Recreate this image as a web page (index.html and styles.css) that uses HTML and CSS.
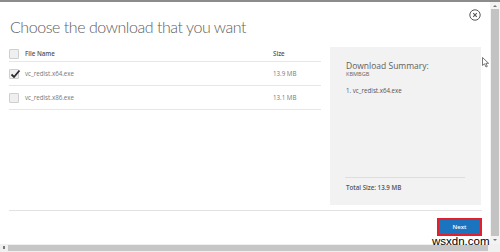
FILE: index.html
```html
<!DOCTYPE html>
<html>
<head>
<meta charset="utf-8">
<link rel="stylesheet" href="styles.css">
</head>
<body>
<div class="window">
  <div class="topbar"></div>
  <div class="body">
    <div class="main">
      <div class="head">
        <h1 class="title">Choose the download that you want</h1>
        <span class="close">
          <svg width="12" height="12" viewBox="0 0 12 12"><circle cx="6" cy="6" r="5.2" fill="none" stroke="#555" stroke-width="1"/><path d="M4.2 4.2L7.8 7.8M7.8 4.2L4.2 7.8" stroke="#555" stroke-width="1.1"/></svg>
        </span>
      </div>
      <div class="content">
        <div class="table">
          <div class="row header">
            <span class="cb"></span>
            <span class="name">File Name</span>
            <span class="size">Size</span>
          </div>
          <div class="row item">
            <span class="cb checked"><svg width="11" height="10" viewBox="0 0 11 10"><path d="M1.5 5.5L4 8L9.5 1.5" fill="none" stroke="#2a2a2a" stroke-width="1.8"/></svg></span>
            <span class="name">vc_redist.x64.exe</span>
            <span class="size">13.9 MB</span>
          </div>
          <div class="row item">
            <span class="cb"></span>
            <span class="name">vc_redist.x86.exe</span>
            <span class="size">13.1 MB</span>
          </div>
        </div>
        <div class="summary">
          <div class="sum-title">Download Summary:</div>
          <div class="sum-kb">KBMBGB</div>
          <div class="sum-item">1. vc_redist.x64.exe</div>
          <div class="sum-spacer"></div>
          <div class="sum-divider"></div>
          <div class="sum-total">Total Size: 13.9 MB</div>
        </div>
      </div>
      <div class="footer">
        <button class="next">Next</button>
      </div>
    </div>
    <div class="vscroll">
      <span class="arrow up"></span>
      <span class="vthumb"></span>
      <span class="arrow down"></span>
    </div>
  </div>
  <div class="hscroll">
    <span class="harrow"></span>
    <span class="hthumb"></span>
    <span class="hcorner"></span>
  </div>
  <svg class="cursor" width="8" height="11" viewBox="0 0 8 11"><path d="M0.5 0.5L0.5 8.5L2.5 6.8L4 10L5.3 9.4L3.9 6.3L6.6 6.3Z" fill="#fff" stroke="#555" stroke-width="0.8"/></svg>
  <div class="watermark">wsxdn.com</div>
</div>
</body>
</html>
```
FILE: styles.css
```css
* { box-sizing: border-box; }
html, body { margin: 0; padding: 0; background: #fff; }
body { width: 500px; height: 252px; overflow: hidden; font-family: "Open Sans", "Noto Sans", sans-serif; }

.window { position: relative; width: 500px; height: 252px; display: flex; flex-direction: column; background: #fff; }
.topbar { height: 2px; background: #8c8c8c; flex: none; }
.body { display: flex; height: 242px; flex: none; }
.main { width: 490px; display: flex; flex-direction: column; }

.head { display: flex; justify-content: space-between; align-items: flex-start; height: 44px; padding: 7px 9px 0 10px; }
.title { margin: 8px 0 0; font-family: "Lato", "Open Sans", sans-serif; font-weight: 300; font-size: 16px; line-height: 20px; color: #606060; letter-spacing: -0.45px; }
.close { display: block; width: 12px; height: 12px; }
.close svg { display: block; }

.content { display: flex; padding: 0 9px; gap: 9px; align-items: flex-start; }
.table { width: 312px; }
.row { display: flex; align-items: center; border-bottom: 1px solid #e6e6e6; }
.row.header { height: 16px; }
.row.item { height: 24px; }
.cb { width: 10px; height: 10px; border: 1px solid #cfcfcf; background: #efefef; border-radius: 1px; flex: none; position: relative; }
.cb.checked svg { position: absolute; left: 0; top: -1px; }
.name { margin-left: 6px; width: 248px; font-size: 6.2px; color: #777; }
.size { font-size: 6.2px; color: #777; }
.header .name, .header .size { font-weight: 600; color: #555; }

.summary { width: 151px; height: 158px; margin-top: 1px; background: #f2f2f2; display: flex; flex-direction: column; padding: 13px 16px 13px 16px; }
.sum-title { font-size: 8.5px; line-height: 11px; color: #606060; }
.sum-kb { font-size: 5.6px; line-height: 6px; color: #666; }
.sum-item { margin-top: 10px; font-size: 6.2px; line-height: 8px; color: #555; }
.sum-spacer { flex: 1; }
.sum-divider { height: 1px; background: #dedede; margin-left: -1px; }
.sum-total { margin-top: 6px; font-size: 6.2px; line-height: 8px; font-weight: 600; color: #555; }

.footer { margin: 5px 8px 0 9px; border-top: 1px solid #e2e2e2; padding-top: 7px; display: flex; justify-content: flex-end; }
.next { width: 45px; height: 18px; border: 2px solid #e41e2b; background: #1c74bf; color: #fff; font-family: "Open Sans", sans-serif; font-size: 6px; font-weight: 600; padding: 0; margin: 0; }

.vscroll { width: 10px; background: #f3f3f3; display: flex; flex-direction: column; align-items: center; padding-top: 3px; }
.arrow { width: 0; height: 0; border-left: 2px solid transparent; border-right: 2px solid transparent; flex: none; }
.arrow.up { border-bottom: 2px solid #777; }
.arrow.down { border-top: 2px solid #777; margin-top: 3px; }
.vthumb { width: 8px; height: 227px; margin-top: 2px; background: #c3c3c3; }

.hscroll { height: 8px; display: flex; align-items: stretch; background: #f0f0f0; }
.harrow { width: 8px; position: relative; }
.harrow::after { content: ""; position: absolute; left: 3px; top: 2px; width: 2px; height: 3px; background: #777; }
.hthumb { width: 480px; margin: 1px 0; background: #c6c6c6; }
.hcorner { flex: 1; }

.cursor { position: absolute; left: 482px; top: 57px; }
.watermark { position: absolute; left: 432px; top: 234px; font-family: "Liberation Sans", Arial, sans-serif; font-size: 11.5px; color: #000; line-height: 14px; }
```
